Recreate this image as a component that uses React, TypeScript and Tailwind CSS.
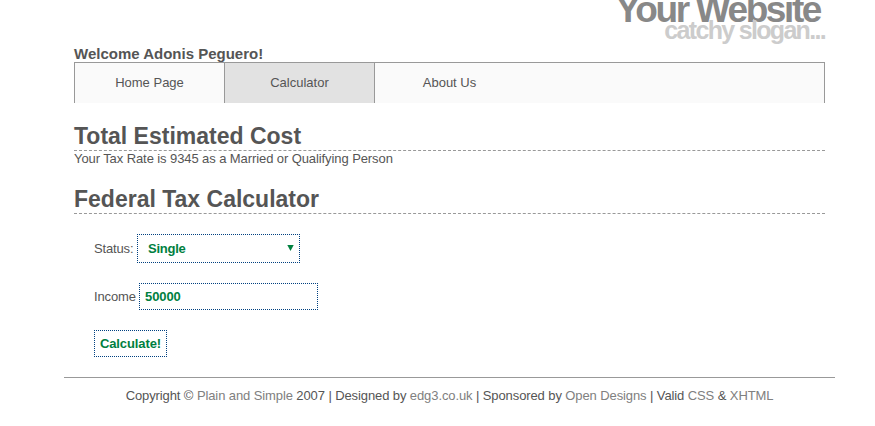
export default function App() {
  return (
    <div className="h-[426px] w-[875px] overflow-hidden bg-white text-[13px] leading-[16px] text-[#555] [font-family:'Liberation_Sans',Arial,sans-serif]">
      <div className="ml-[64px] w-[771px]">
        <header className="h-[46px] overflow-hidden text-right font-bold">
          <div className="-mt-[10px] pr-[15px] text-[37px] leading-[40px] tracking-[-2.4px] text-[#888]">Your Website</div>
          <div className="-mt-[13px] pr-[10px] text-[25px] leading-[26px] tracking-[-1.68px] text-[#ccc]">catchy slogan...</div>
        </header>
        <main className="px-[10px]">
          <h3 className="h-[16px] text-[15px] font-bold leading-[16px]">Welcome Adonis Peguero!</h3>
          <nav className="flex h-[41px] border border-b-0 border-[#999] bg-[#fafafa] text-center leading-[39px]">
            <a className="w-[150px] border-r border-[#999]">Home Page</a>
            <a className="w-[150px] border-r border-[#999] bg-[#e2e2e2]">Calculator</a>
            <a className="w-[149px]">About Us</a>
          </nav>
          <h1 className="mt-[19px] h-[29px] border-b border-dashed border-[#999] text-[23px] font-bold leading-[28px]">Total Estimated Cost</h1>
          <p className="tracking-[-0.09px]">Your Tax Rate is 9345 as a Married or Qualifying Person</p>
          <h1 className="mt-[18px] h-[29px] border-b border-dashed border-[#999] text-[23px] font-bold leading-[28px]">Federal Tax Calculator</h1>
          <form className="pl-[20px] pt-[20px]">
            <div className="flex h-[29px] items-center">
              <span className="w-[43px] tracking-[-0.15px]">Status:</span>
              <div className="flex h-[29px] w-[163px] items-center justify-between border border-dotted border-[#004080] pl-[10px] pr-[5px] font-bold text-[#00803f]">
                <span className="tracking-[-0.25px]">Single</span>
                <svg className="-mt-[2px]" width="7" height="6" viewBox="0 0 7 6"><path d="M0.3 0H6.7L3.5 6Z" fill="#00803f" /></svg>
              </div>
            </div>
            <div className="mt-[20px] flex h-[27px] items-center">
              <span className="w-[45px] tracking-[-0.15px]">Income</span>
              <div className="flex h-[27px] w-[179px] items-center border border-dotted border-[#004080] pl-[5px] font-bold tracking-[-0.1px] text-[#00803f]">50000</div>
            </div>
            <button type="button" className="mt-[20px] block h-[27px] w-[73px] border border-dotted border-[#004080] font-bold tracking-[-0.1px] text-[#00803f]">Calculate!</button>
          </form>
        </main>
        <footer className="mt-[20px] border-t border-[#999] pt-[10px] text-center tracking-[-0.1px]">
          Copyright © <a className="text-[#808080]">Plain and Simple</a> 2007 | Designed by <a className="text-[#808080]">edg3.co.uk</a> | Sponsored by <a className="text-[#808080]">Open Designs</a> | Valid <a className="text-[#808080]">CSS</a> &amp; <a className="text-[#808080]">XHTML</a>
        </footer>
      </div>
    </div>
  );
}
